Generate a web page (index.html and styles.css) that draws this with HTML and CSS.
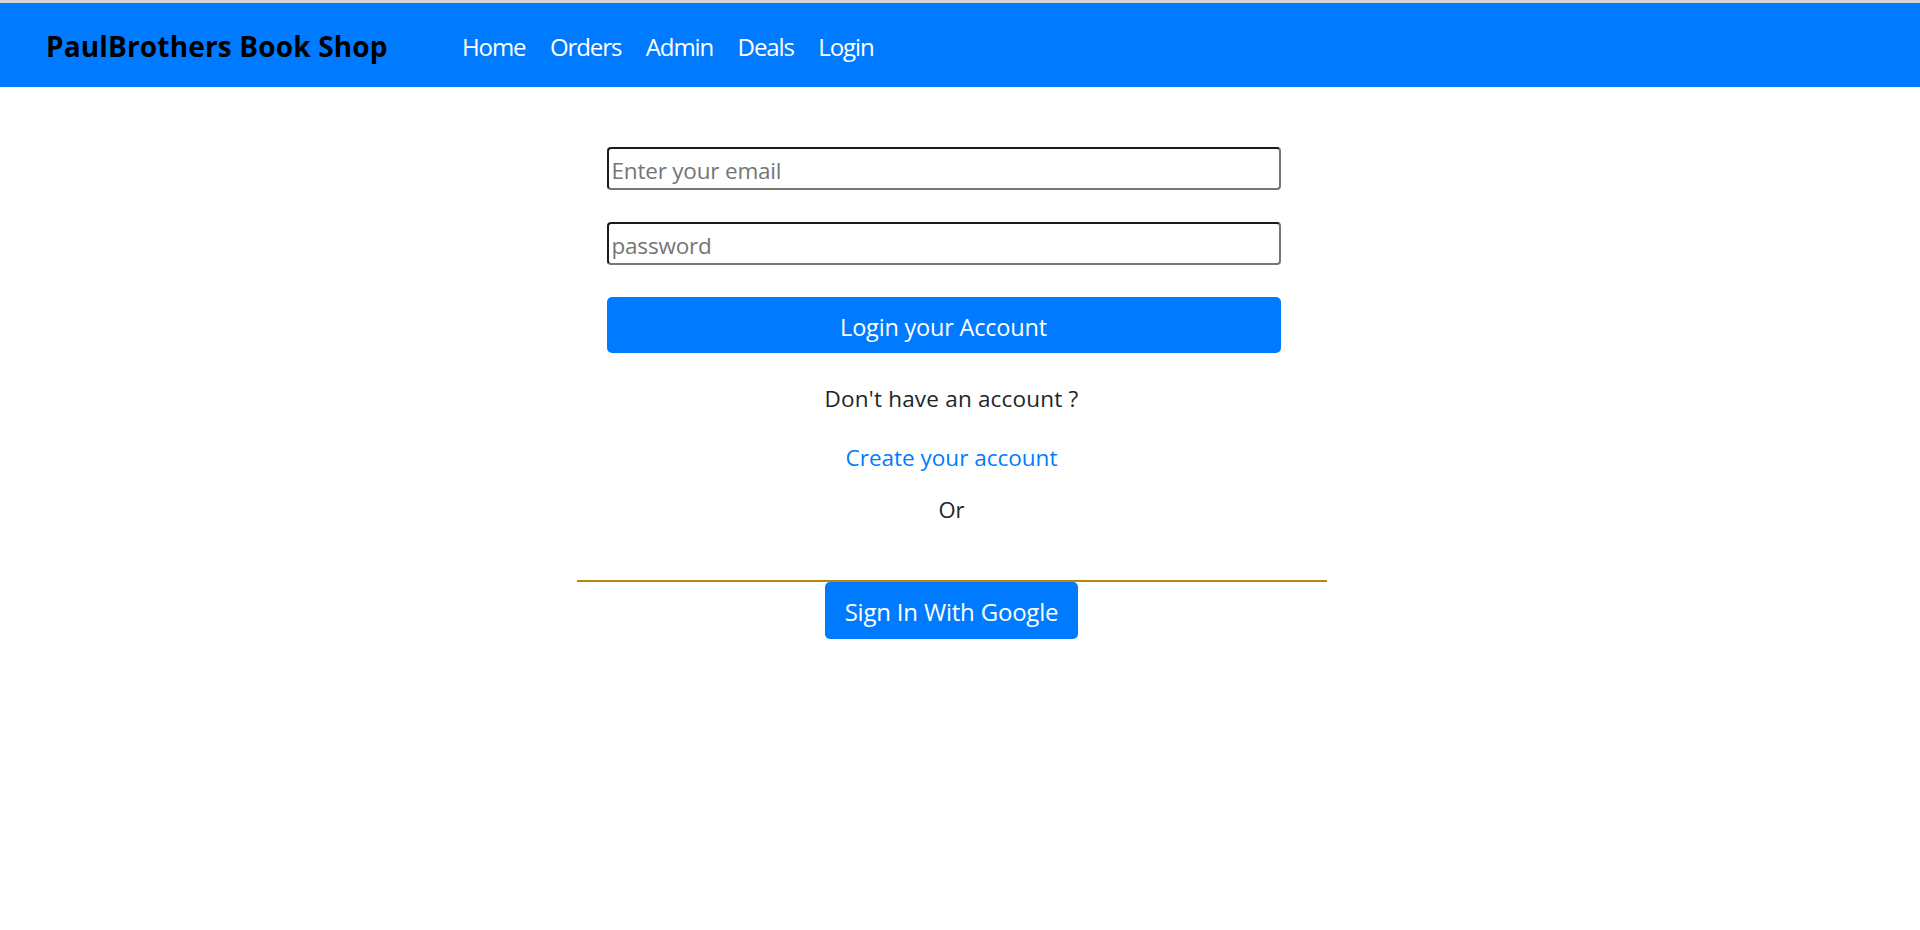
FILE: index.html
```html
<!DOCTYPE html>
<html lang="en">
<head>
<meta charset="utf-8">
<title>PaulBrothers Book Shop</title>
<link rel="stylesheet" href="styles.css">
</head>
<body>
<nav class="navbar">
  <a class="brand" href="#">PaulBrothers Book Shop</a>
  <ul class="nav-links">
    <li><a href="#">Home</a></li>
    <li><a href="#">Orders</a></li>
    <li><a href="#">Admin</a></li>
    <li><a href="#">Deals</a></li>
    <li><a href="#">Login</a></li>
  </ul>
</nav>
<main class="page">
  <div class="login">
    <form class="login-form">
      <input class="field" type="email" placeholder="Enter your email">
      <input class="field" type="password" placeholder="password">
      <button class="btn btn-login" type="button">Login your Account</button>
    </form>
    <p class="prompt">Don't have an account ?</p>
    <a class="create-link" href="#">Create your account</a>
    <p class="or">Or</p>
    <hr class="divider">
    <button class="btn btn-google" type="button">Sign In With Google</button>
  </div>
</main>
</body>
</html>
```
FILE: styles.css
```css
* { box-sizing: border-box; }
html, body { margin: 0; padding: 0; background: #fff; }
body {
  font-family: "Open Sans", "Noto Sans", sans-serif;
  color: #212529;
}
a { text-decoration: none; }

.navbar {
  display: flex;
  align-items: center;
  height: 87px;
  border-top: 3px solid #d4d4d4;
  background: #007bff;
  padding: 2px 0 0 46px;
}
.brand {
  width: 416px;
  color: #000;
  font-weight: 700;
  font-size: 28px;
  letter-spacing: 0.15px;
  line-height: 1;
}
.nav-links {
  display: flex;
  gap: 24.5px;
  list-style: none;
  margin: 0;
  padding: 3px 0 0;
}
.nav-links a {
  color: #fff;
  font-size: 24px;
  letter-spacing: -1.1px;
  line-height: 1;
}

.page { padding-right: 17px; }
.login {
  width: 750px;
  margin: 0 auto;
  display: flex;
  flex-direction: column;
  align-items: center;
}
.login-form {
  align-self: flex-start;
  margin: 60px 0 0 30px;
  width: 674px;
  display: flex;
  flex-direction: column;
}
.field {
  height: 43px;
  width: 100%;
  margin: 0 0 32px;
  padding: 3px 3px 0;
  border: 2px solid;
  border-color: #1b1b1b #767676 #767676 #1b1b1b;
  border-radius: 4px;
  font-family: inherit;
  font-size: 22.5px;
  letter-spacing: -0.2px;
  color: #212529;
  outline: none;
}
.field::placeholder { color: #757575; }

.btn {
  border: 0;
  border-radius: 5px;
  background: #007bff;
  color: #fff;
  font-family: inherit;
  font-size: 23.5px;
  letter-spacing: -0.2px;
  line-height: 36px;
  cursor: pointer;
}
.btn-login { height: 56px; width: 100%; padding: 12px 16px 8px; }

.prompt {
  margin: 29px 0 0;
  font-size: 22.5px;
  letter-spacing: 0.2px;
  line-height: 33px;
}
.create-link {
  margin-top: 25.5px;
  color: #007bff;
  font-size: 22.5px;
  letter-spacing: 0;
  line-height: 33px;
}
.or {
  margin: 19.5px 0 0;
  font-size: 22px;
  line-height: 33px;
}
.divider {
  width: 750px;
  margin: 54px 0 0;
  border: 0;
  border-top: 2px solid #b8860b;
}
.btn-google { height: 57px; padding: 12px 20px 9px; font-size: 24px; letter-spacing: -0.2px; }
```
